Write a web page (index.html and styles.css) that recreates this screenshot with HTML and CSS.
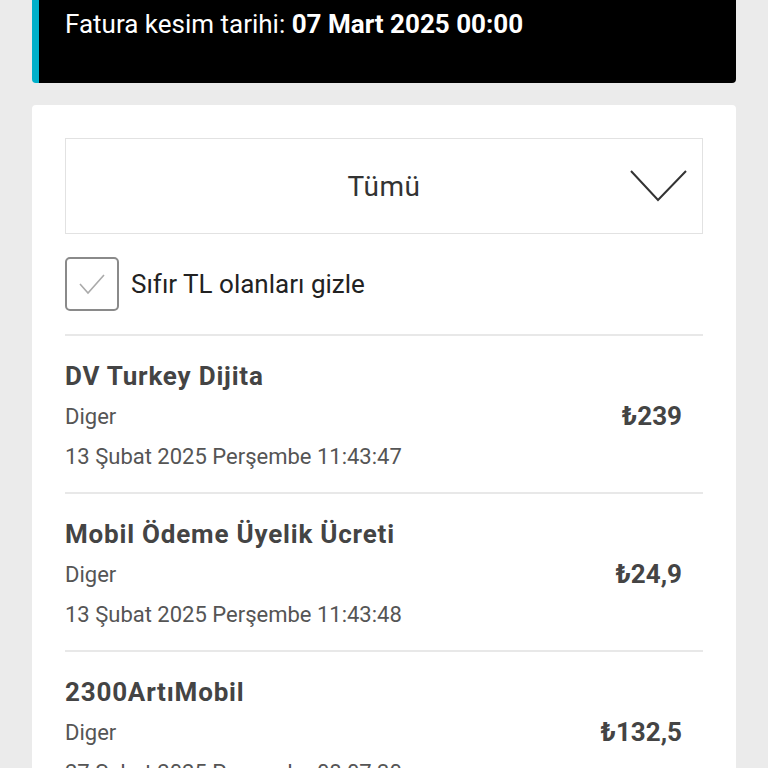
FILE: index.html
```html
<!DOCTYPE html>
<html>
<head>
  <title>Fatura Detayı</title>
  <link rel="stylesheet" href="styles.css">
</head>
<body>
  <div class="page">
    <div class="banner">
      Fatura kesim tarihi: <b>07 Mart 2025 00:00</b>
    </div>

    <div class="card">
      <div class="dropdown">
        <span></span>
        <span class="dropdown-label">Tümü</span>
        <svg class="chevron" width="57" height="34" viewBox="0 0 57 34">
          <polyline points="1,2 28,31 56,2" fill="none" stroke="#333" stroke-width="2"/>
        </svg>
      </div>

      <label class="hide-zero">
        <span class="checkbox">
          <svg width="30" height="24" viewBox="0 0 30 24">
            <polyline points="3,12 11,21 27,3" fill="none" stroke="#aaa" stroke-width="1.6"/>
          </svg>
        </span>
        Sıfır TL olanları gizle
      </label>

      <div class="item">
        <div class="item-info">
          <div class="item-title">DV Turkey Dijita</div>
          <div class="item-sub">Diger</div>
          <div class="item-sub">13 Şubat 2025 Perşembe 11:43:47</div>
        </div>
        <div class="item-price">₺239</div>
      </div>

      <div class="item">
        <div class="item-info">
          <div class="item-title">Mobil Ödeme Üyelik Ücreti</div>
          <div class="item-sub">Diger</div>
          <div class="item-sub">13 Şubat 2025 Perşembe 11:43:48</div>
        </div>
        <div class="item-price">₺24,9</div>
      </div>

      <div class="item">
        <div class="item-info">
          <div class="item-title">2300ArtıMobil</div>
          <div class="item-sub">Diger</div>
          <div class="item-sub">27 Şubat 2025 Perşembe 08:07:30</div>
        </div>
        <div class="item-price">₺132,5</div>
      </div>
    </div>
  </div>
</body>
</html>
```

FILE: styles.css
```css
body {
  margin: 0;
  background-color: #ebebeb;
  font-family: Roboto, "DejaVu Sans", sans-serif;
  color: #333;
}
.page {
  padding: 0 32px;
}
.banner {
  background-color: #000;
  color: #fff;
  border-left: 7px solid #00b0ca;
  border-radius: 0 0 4px 4px;
  padding: 8px 26px 43px;
  font-size: 26px;
  line-height: 32px;
}
.card {
  margin-top: 22px;
  background-color: #fff;
  border-radius: 4px 4px 0 0;
  padding: 33px 33px 0;
}
.dropdown {
  height: 94px;
  border: 1px solid #e2e2e2;
  display: grid;
  grid-template-columns: 1fr auto 1fr;
  align-items: center;
}
.dropdown-label {
  font-size: 28px;
  letter-spacing: 0.5px;
  color: #333;
}
.chevron {
  justify-self: end;
  margin-right: 15px;
}
.hide-zero {
  display: flex;
  align-items: center;
  gap: 12px;
  margin: 23px 0;
  font-size: 26px;
  color: #222;
}
.checkbox {
  width: 50px;
  height: 50px;
  border: 2px solid #8a8a8a;
  border-radius: 5px;
  display: flex;
  align-items: center;
  justify-content: center;
}
.item {
  border-top: 2px solid #e8e8e8;
  padding: 19px 21px 15px 0;
  display: flex;
  align-items: center;
  justify-content: space-between;
}
.item-title {
  font-size: 26px;
  font-weight: bold;
  letter-spacing: 0.8px;
  color: #444;
  line-height: 42px;
}
.item-sub {
  font-size: 22px;
  color: #555;
  line-height: 40px;
}
.item-price {
  font-size: 26px;
  font-weight: bold;
  color: #444;
}
```
